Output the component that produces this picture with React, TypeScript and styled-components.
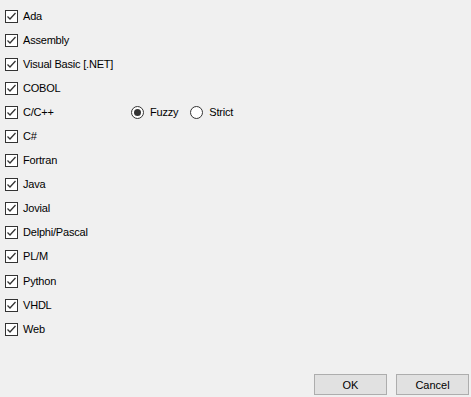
import React from "react";
import styled, { createGlobalStyle } from "styled-components";

const Global = createGlobalStyle`
  html, body { margin: 0; padding: 0; background: #f0f0f0; }
  body { font-family: "Liberation Sans", Arial, sans-serif; font-size: 11px; color: #000; }
`;

const Window = styled.div`
  width: 471px;
  height: 397px;
  display: flex;
  flex-direction: column;
  background: #f0f0f0;
  overflow: hidden;
`;

const List = styled.div`
  display: flex;
  flex-direction: column;
  padding: 4px 0 0 5px;
  flex: 1;
`;

const Row = styled.div`
  height: 24.1px;
  display: flex;
  align-items: center;
`;

const CheckCell = styled.label`
  display: flex;
  align-items: center;
  width: 126px;
  gap: 5px;
`;

const BoxSvg = styled.svg`
  width: 13px;
  height: 13px;
  flex: none;
  display: block;
`;

const Label = styled.span`
  line-height: 13px;
  white-space: nowrap;
  letter-spacing: -0.2px;
`;

const RadioGroup = styled.div`
  display: flex;
  align-items: center;
`;

const RadioItem = styled.label`
  display: flex;
  align-items: center;
  gap: 6px;
  margin-right: 12px;
`;

const Footer = styled.div`
  display: flex;
  justify-content: flex-end;
  gap: 9px;
  padding: 0 2px 2px 0;
`;

const Button = styled.button`
  width: 73px;
  height: 21px;
  box-sizing: border-box;
  background: #e1e1e1;
  border: 1px solid #adadad;
  font-family: "Liberation Sans", Arial, sans-serif;
  font-size: 11px;
  color: #000;
  padding: 0;
`;

const CheckBox = () => (
  <BoxSvg viewBox="0 0 13 13">
    <rect x="0.5" y="0.5" width="12" height="12" fill="#ffffff" stroke="#333333" />
    <path d="M2.5 6.5 L5 9 L10.5 3" fill="none" stroke="#333333" strokeWidth="1.3" />
  </BoxSvg>
);

const Radio = ({ checked }: { checked?: boolean }) => (
  <BoxSvg viewBox="0 0 13 13">
    <circle cx="6.5" cy="6.5" r="6" fill="#ffffff" stroke="#333333" />
    {checked && <circle cx="6.5" cy="6.5" r="3.5" fill="#333333" />}
  </BoxSvg>
);

const langs = [
  "Ada",
  "Assembly",
  "Visual Basic [.NET]",
  "COBOL",
  "C/C++",
  "C#",
  "Fortran",
  "Java",
  "Jovial",
  "Delphi/Pascal",
  "PL/M",
  "Python",
  "VHDL",
  "Web",
];

export default function App() {
  return (
    <Window>
      <Global />
      <List>
        {langs.map((l) => (
          <Row key={l}>
            <CheckCell>
              <CheckBox />
              <Label>{l}</Label>
            </CheckCell>
            {l === "C/C++" && (
              <RadioGroup>
                <RadioItem>
                  <Radio checked />
                  <Label>Fuzzy</Label>
                </RadioItem>
                <RadioItem>
                  <Radio />
                  <Label>Strict</Label>
                </RadioItem>
              </RadioGroup>
            )}
          </Row>
        ))}
      </List>
      <Footer>
        <Button>OK</Button>
        <Button>Cancel</Button>
      </Footer>
    </Window>
  );
}
